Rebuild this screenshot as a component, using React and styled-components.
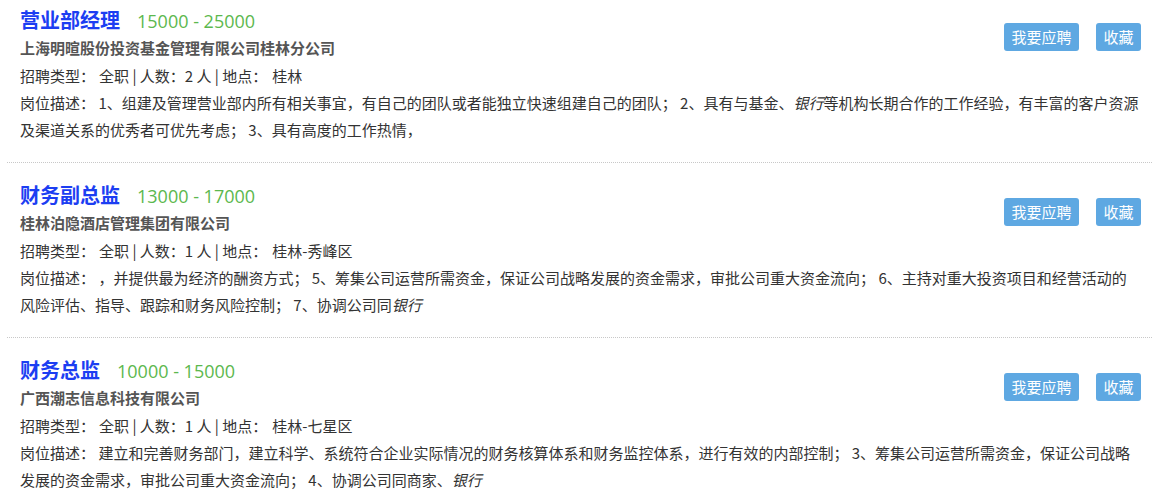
import React from "react";
import styled, { createGlobalStyle } from "styled-components";

const GlobalStyle = createGlobalStyle`
  body {
    margin: 0;
    background: #fff;
    font-family: "Noto Sans CJK SC", "Microsoft YaHei", "Liberation Sans", sans-serif;
    color: #333;
  }
`;

const jobs = [
  {
    title: "营业部经理",
    salary: "15000 - 25000",
    company: "上海明暄股份投资基金管理有限公司桂林分公司",
    count: 2,
    place: "桂林",
    desc: [
      "\u00a01、组建及管理营业部内所有相关事宜，有自己的团队或者能独立快速组建自己的团队； 2、具有与基金、",
      { em: "银行" },
      "等机构长期合作的工作经验，有丰富的客户资源及渠道关系的优秀者可优先考虑； 3、具有高度的工作热情，",
    ],
  },
  {
    title: "财务副总监",
    salary: "13000 - 17000",
    company: "桂林泊隐酒店管理集团有限公司",
    count: 1,
    place: "桂林-秀峰区",
    desc: [
      "\u00a0，并提供最为经济的酬资方式； 5、筹集公司运营所需资金，保证公司战略发展的资金需求，审批公司重大资金流向； 6、主持对重大投资项目和经营活动的风险评估、指导、跟踪和财务风险控制； 7、协调公司同",
      { em: "银行" },
    ],
  },
  {
    title: "财务总监",
    salary: "10000 - 15000",
    company: "广西潮志信息科技有限公司",
    count: 1,
    place: "桂林-七星区",
    desc: [
      "\u00a0建立和完善财务部门，建立科学、系统符合企业实际情况的财务核算体系和财务监控体系，进行有效的内部控制； 3、筹集公司运营所需资金，保证公司战略发展的资金需求，审批公司重大资金流向； 4、协调公司同商家、",
      { em: "银行" },
    ],
  },
];

const List = styled.ul`
  list-style: none;
  margin: 0 0 0 7px;
  padding: 0;
`;

const Item = styled.li`
  padding: 18px 11px 19px 13px;
  border-bottom: 1px dotted #c8c8c8;

  &:first-child {
    padding-top: 6px;
  }
  &:last-child {
    border-bottom: none;
  }
`;

const Actions = styled.div`
  float: right;
  display: flex;
  gap: 17px;
  margin-top: 17px;
`;

const Button = styled.a`
  display: block;
  height: 28px;
  line-height: 28px;
  padding: 0 7.5px;
  border-radius: 3px;
  background: #5ea8e2;
  color: #fff;
  font-size: 15px;
  text-decoration: none;
  cursor: pointer;
`;

const TitleRow = styled.div`
  height: 28px;
  line-height: 28px;
  white-space: nowrap;
`;

const Title = styled.a`
  font-size: 20px;
  font-weight: bold;
  color: #1c3ef2;
  text-decoration: none;
`;

const Salary = styled.span`
  margin-left: 17px;
  font-family: "Open Sans", "Noto Sans CJK SC", sans-serif;
  font-size: 18px;
  color: #5cb84e;
`;

const Company = styled.div`
  line-height: 28px;
  font-size: 15px;
  font-weight: bold;
  color: #555;
`;

const Line = styled.p`
  margin: 0;
  font-size: 15px;
  line-height: 27px;
  color: #333;

  em {
    font-style: italic;
  }
`;

const Gap = styled.span`
  display: inline-block;
  width: ${({ w }) => w}px;
`;

export default function App() {
  return (
    <>
      <GlobalStyle />
      <List>
        {jobs.map((job) => (
          <Item key={job.title}>
            <Actions>
              <Button>我要应聘</Button>
              <Button>收藏</Button>
            </Actions>
            <TitleRow>
              <Title>{job.title}</Title>
              <Salary>{job.salary}</Salary>
            </TitleRow>
            <Company>{job.company}</Company>
            <Line>
              {`招聘类型：`}
              <Gap w={4} />
              {`全职 | 人数：${job.count} 人 | 地点：`}
              <Gap w={5} />
              {job.place}
            </Line>
            <Line>
              {"岗位描述："}
              {job.desc.map((part, i) =>
                typeof part === "string" ? part : <em key={i}>{part.em}</em>
              )}
            </Line>
          </Item>
        ))}
      </List>
    </>
  );
}
